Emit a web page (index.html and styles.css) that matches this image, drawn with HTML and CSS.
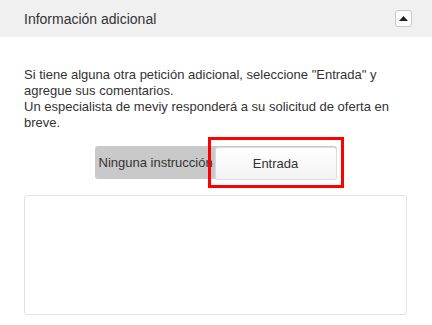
FILE: index.html
```html
<!DOCTYPE html>
<html lang="es">
<head>
    <meta charset="UTF-8">
    <meta name="viewport" content="width=device-width, initial-scale=1.0">
    <title>Información adicional</title>
    <link rel="stylesheet" href="styles.css">
</head>
<body>
    <div class="panel">
        <div class="panel-header">
            <span class="panel-title">Información adicional</span>
            <button type="button" class="collapse-btn" aria-label="Cerrar">
                <svg width="9" height="5" viewBox="0 0 9 5"><path d="M0 5 L4.5 0 L9 5 Z" fill="#222"/></svg>
            </button>
        </div>

        <div class="panel-body">
            <p class="note">
                Si tiene alguna otra petición adicional, seleccione "Entrada" y agregue sus comentarios.<br>
                Un especialista de meviy responderá a su solicitud de oferta en breve.
            </p>

            <div class="switch-row">
                <div class="switch">
                    <span class="switch-option">Ninguna instrucción</span>
                    <span class="switch-option active">Entrada</span>
                    <span class="highlight"></span>
                </div>
            </div>

            <textarea class="comment"></textarea>
        </div>
    </div>
</body>
</html>
```

FILE: styles.css
```css
body {
    margin: 0;
    font-family: "Liberation Sans", Arial, sans-serif;
    color: #333;
    background-color: #fff;
}
.panel-header {
    height: 37px;
    background-color: #f0f0f0;
    display: flex;
    align-items: center;
    justify-content: space-between;
    padding: 0 20px 0 24px;
}
.panel-title {
    font-size: 14px;
    color: #333;
}
.collapse-btn {
    width: 17px;
    height: 17px;
    padding: 0;
    border: 1px solid #c8c8c8;
    border-radius: 3px;
    background-color: #fcfcfc;
    display: flex;
    align-items: center;
    justify-content: center;
}
.panel-body {
    padding: 0 25px 0 24px;
}
.note {
    margin: 30px 0 0;
    font-size: 13px;
    line-height: 16px;
}
.switch-row {
    display: flex;
    justify-content: center;
    margin-top: 15px;
}
.switch {
    position: relative;
    display: flex;
    background-color: #c9c9c9;
    border-radius: 3px;
    height: 33px;
}
.switch-option {
    width: 120px;
    display: flex;
    align-items: center;
    justify-content: center;
    font-size: 13px;
    white-space: nowrap;
    overflow: hidden;
}
.switch-option:first-child {
    justify-content: flex-start;
    padding-left: 4px;
    width: 116px;
}
.switch-option.active {
    width: 120px;
    background: linear-gradient(#ffffff, #f3f3f3);
    border: 1px solid #dcdcdc;
    border-radius: 3px;
    margin: 1px 0 -1px;
}
.highlight {
    position: absolute;
    left: 113px;
    top: -9px;
    width: 130px;
    height: 45px;
    border: 3px solid #f00;
}
.comment {
    display: block;
    box-sizing: border-box;
    width: 100%;
    height: 120px;
    margin-top: 16px;
    border: 1px solid #e3e3e3;
    border-radius: 3px;
    resize: none;
    font-family: inherit;
}
```
